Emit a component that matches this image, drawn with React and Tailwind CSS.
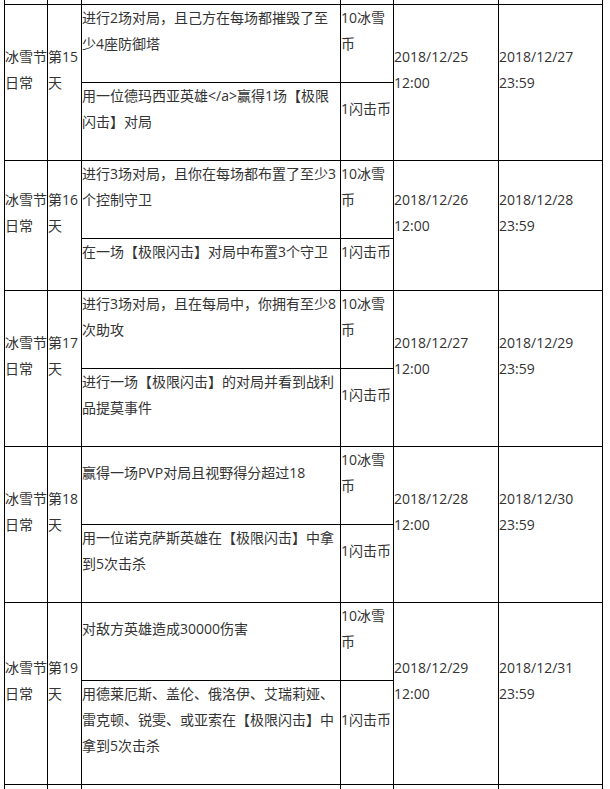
import React from "react";

const groups = [
  {
    name: "冰雪节日常",
    day: "第15天",
    rows: [
      ["进行2场对局，且己方在每场都摧毁了至少4座防御塔", "10冰雪币"],
      ["用一位德玛西亚英雄</a>赢得1场【极限闪击】对局", "1闪击币"],
    ],
    start: "2018/12/25 12:00",
    end: "2018/12/27 23:59",
  },
  {
    name: "冰雪节日常",
    day: "第16天",
    rows: [
      ["进行3场对局，且你在每场都布置了至少3个控制守卫", "10冰雪币"],
      ["在一场【极限闪击】对局中布置3个守卫", "1闪击币"],
    ],
    start: "2018/12/26 12:00",
    end: "2018/12/28 23:59",
  },
  {
    name: "冰雪节日常",
    day: "第17天",
    rows: [
      ["进行3场对局，且在每局中，你拥有至少8次助攻", "10冰雪币"],
      ["进行一场【极限闪击】的对局并看到战利品提莫事件", "1闪击币"],
    ],
    start: "2018/12/27 12:00",
    end: "2018/12/29 23:59",
  },
  {
    name: "冰雪节日常",
    day: "第18天",
    rows: [
      ["赢得一场PVP对局且视野得分超过18", "10冰雪币"],
      ["用一位诺克萨斯英雄在【极限闪击】中拿到5次击杀", "1闪击币"],
    ],
    start: "2018/12/28 12:00",
    end: "2018/12/30 23:59",
  },
  {
    name: "冰雪节日常",
    day: "第19天",
    rows: [
      ["对敌方英雄造成30000伤害", "10冰雪币"],
      ["用德莱厄斯、盖伦、俄洛伊、艾瑞莉娅、雷克顿、锐雯、或亚索在【极限闪击】中拿到5次击杀", "1闪击币"],
    ],
    start: "2018/12/29 12:00",
    end: "2018/12/31 23:59",
  },
];

function Cell({ children, span }) {
  return (
    <div className={`bg-white flex flex-col justify-center overflow-hidden ${span ? "row-span-2" : ""}`}>
      <p className="pb-[25px] leading-[26px] break-words">{children}</p>
    </div>
  );
}

function Blank() {
  return <div className="bg-white" />;
}

export default function App() {
  return (
    <div className="bg-white w-[610px] h-[789px] overflow-hidden pl-[4px] font-['Open_Sans','Noto_Sans_CJK_SC',sans-serif] text-[14px] text-[#333333]">
      <div className="grid w-[599px] bg-black gap-px px-px grid-cols-[42px_33px_258px_52px_104px_103px] grid-rows-[4px_77px_77px_77px_51px_77px_77px_77px_77px_77px_103px_10px]">
        <Blank />
        <Blank />
        <Blank />
        <Blank />
        <Blank />
        <Blank />
        {groups.map((g, i) => (
          <React.Fragment key={i}>
            <Cell span>{g.name}</Cell>
            <Cell span>{g.day}</Cell>
            <Cell>{g.rows[0][0]}</Cell>
            <Cell>{g.rows[0][1]}</Cell>
            <Cell span>{g.start}</Cell>
            <Cell span>{g.end}</Cell>
            <Cell>{g.rows[1][0]}</Cell>
            <Cell>{g.rows[1][1]}</Cell>
          </React.Fragment>
        ))}
        <Blank />
        <Blank />
        <Blank />
        <Blank />
        <Blank />
        <Blank />
      </div>
    </div>
  );
}
